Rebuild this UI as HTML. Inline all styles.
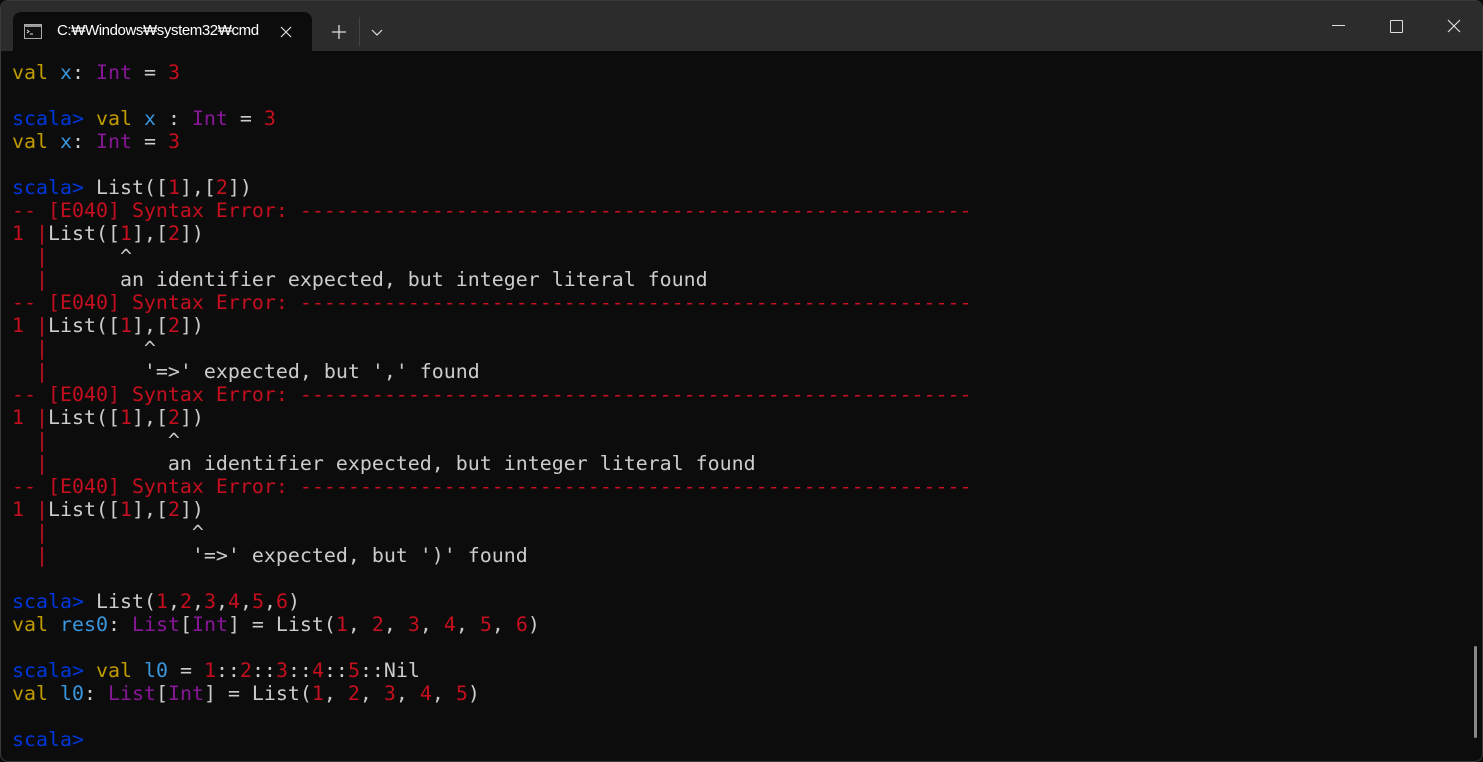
<!DOCTYPE html>
<html><head><meta charset="utf-8"><style>
html,body{margin:0;padding:0;background:#0c0c0c;width:1483px;height:762px;overflow:hidden}
.win{position:absolute;left:0;top:0;width:1481px;height:760px;border:1px solid #3a3a3a;border-radius:8px;background:#0c0c0c;overflow:hidden}
.tb{position:absolute;left:0;top:0;width:100%;height:50px;background:#2c2c2c}
.tab{position:absolute;left:12px;top:11px;width:299px;height:40px;background:#0c0c0c;border-radius:8px 8px 0 0}
.tab .t{position:absolute;left:44px;top:10px;font:15px "Liberation Sans",sans-serif;font-weight:500;color:#fff;letter-spacing:-0.4px}
.term{position:absolute;left:11px;top:60px;font:19.93px/23px "DejaVu Sans Mono","Liberation Mono",monospace;color:#cccccc;white-space:pre;margin:0}
.y{color:#c19c00}.b{color:#3a96dd}.p{color:#881798}.r{color:#c50f1f}.s{color:#0037da}
</style></head><body><div class="win">
<div class="tb">
 <div class="tab">
  <svg style="position:absolute;left:11px;top:12px" width="18" height="15"><rect x="0.5" y="0.5" width="17" height="14" fill="#111" stroke="#aaa"/><rect x="1" y="1" width="16" height="2" fill="#999"/><path d="M3 6l2 1.5-2 1.5M6 10h3" stroke="#ddd" fill="none" stroke-width="1"/></svg>
  <div class="t">C:₩Windows₩system32₩cmd</div>
  <svg style="position:absolute;left:267px;top:14px" width="12" height="12"><path d="M1 1L11 11M11 1L1 11" stroke="#ddd" stroke-width="1.2"/></svg>
 </div>
 <svg style="position:absolute;left:331px;top:24px" width="14" height="14"><path d="M7 0V14M0 7H14" stroke="#ddd" stroke-width="1.3"/></svg>
 <div style="position:absolute;left:358px;top:16px;width:1px;height:29px;background:#444"></div>
 <svg style="position:absolute;left:370px;top:28px" width="12" height="8"><path d="M1 1L6 6L11 1" stroke="#ddd" fill="none" stroke-width="1.2"/></svg>
 <div style="position:absolute;left:1331px;top:24px;width:13px;height:1px;background:#ddd"></div>
 <div style="position:absolute;left:1389px;top:19px;width:11px;height:11px;border:1px solid #ddd;border-radius:1px"></div>
 <svg style="position:absolute;left:1446px;top:18px" width="14" height="14"><path d="M1 1L13 13M13 1L1 13" stroke="#ddd" stroke-width="1.2"/></svg>
</div>
<div style="position:absolute;left:1473px;top:645px;width:3px;height:92px;background:#888;border-radius:2px"></div>
<pre class="term"><span class="y">val</span> <span class="b">x</span>: <span class="p">Int</span> = <span class="r">3</span>

<span class="s">scala&gt;</span> <span class="y">val</span> <span class="b">x</span> : <span class="p">Int</span> = <span class="r">3</span>
<span class="y">val</span> <span class="b">x</span>: <span class="p">Int</span> = <span class="r">3</span>

<span class="s">scala&gt;</span> List([<span class="r">1</span>],[<span class="r">2</span>])
<span class="r">-- [E040] Syntax Error: --------------------------------------------------------</span>
<span class="r">1 |</span>List([<span class="r">1</span>],[<span class="r">2</span>])
<span class="r">  |</span>      ^
<span class="r">  |</span>      an identifier expected, but integer literal found
<span class="r">-- [E040] Syntax Error: --------------------------------------------------------</span>
<span class="r">1 |</span>List([<span class="r">1</span>],[<span class="r">2</span>])
<span class="r">  |</span>        ^
<span class="r">  |</span>        '=&gt;' expected, but ',' found
<span class="r">-- [E040] Syntax Error: --------------------------------------------------------</span>
<span class="r">1 |</span>List([<span class="r">1</span>],[<span class="r">2</span>])
<span class="r">  |</span>          ^
<span class="r">  |</span>          an identifier expected, but integer literal found
<span class="r">-- [E040] Syntax Error: --------------------------------------------------------</span>
<span class="r">1 |</span>List([<span class="r">1</span>],[<span class="r">2</span>])
<span class="r">  |</span>            ^
<span class="r">  |</span>            '=&gt;' expected, but ')' found

<span class="s">scala&gt;</span> List(<span class="r">1</span>,<span class="r">2</span>,<span class="r">3</span>,<span class="r">4</span>,<span class="r">5</span>,<span class="r">6</span>)
<span class="y">val</span> <span class="b">res0</span>: <span class="p">List</span>[<span class="p">Int</span>] = List(<span class="r">1</span>, <span class="r">2</span>, <span class="r">3</span>, <span class="r">4</span>, <span class="r">5</span>, <span class="r">6</span>)

<span class="s">scala&gt;</span> <span class="y">val</span> <span class="b">l0</span> = <span class="r">1</span>::<span class="r">2</span>::<span class="r">3</span>::<span class="r">4</span>::<span class="r">5</span>::Nil
<span class="y">val</span> <span class="b">l0</span>: <span class="p">List</span>[<span class="p">Int</span>] = List(<span class="r">1</span>, <span class="r">2</span>, <span class="r">3</span>, <span class="r">4</span>, <span class="r">5</span>)

<span class="s">scala&gt;</span></pre>
</div></body></html>
